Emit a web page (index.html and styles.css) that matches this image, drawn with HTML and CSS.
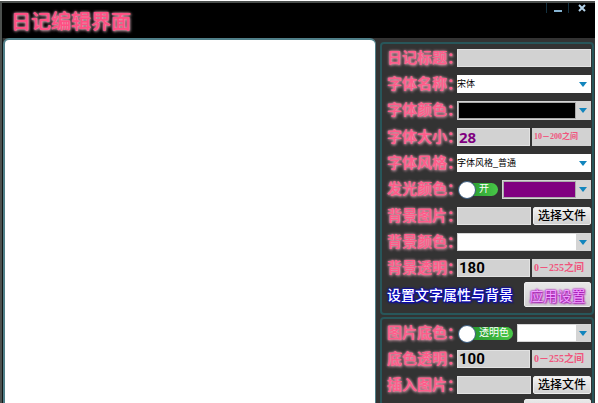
FILE: index.html
```html
<!DOCTYPE html>
<html lang="zh-CN">
<head>
    <meta charset="UTF-8">
    <meta name="viewport" content="width=device-width, initial-scale=1.0">
    <title>日记编辑界面</title>
    <link rel="stylesheet" href="styles.css">
</head>
<body>
    <div class="window">
        <header class="title-bar">
            <h1>日记编辑界面</h1>
            <div class="window-buttons">
                <button type="button" aria-label="最小化">
                    <svg width="8" height="10" viewBox="0 0 8 10"><path d="M0 8h8" stroke="#86b4d2" stroke-width="2"/></svg>
                </button>
                <button type="button" aria-label="关闭">
                    <svg width="8" height="8" viewBox="0 0 8 8"><path d="M1 1l6 6M7 1L1 7" stroke="#b4d2e8" stroke-width="2"/></svg>
                </button>
            </div>
        </header>

        <main class="content">
            <textarea class="editor" aria-label="日记内容"></textarea>

            <div class="sidebar">
                <!-- 文字属性与背景 -->
                <section class="panel">
                    <div class="row">
                        <label class="name" for="title">日记标题：</label>
                        <input class="field" id="title" type="text">
                    </div>
                    <div class="row">
                        <label class="name" for="fontName">字体名称：</label>
                        <div class="combo">
                            <select id="fontName"><option>宋体</option></select>
                        </div>
                    </div>
                    <div class="row color-row">
                        <label class="name" for="fontColor">字体颜色：</label>
                        <div class="combo color black">
                            <select id="fontColor"><option></option></select>
                        </div>
                    </div>
                    <div class="row">
                        <label class="name" for="fontSize">字体大小：</label>
                        <input class="field purple-text" id="fontSize" type="text" value="28">
                        <span class="hint small">10－200之间</span>
                    </div>
                    <div class="row">
                        <label class="name" for="fontStyle">字体风格：</label>
                        <div class="combo">
                            <select id="fontStyle"><option>字体风格_普通</option></select>
                        </div>
                    </div>
                    <div class="row color-row">
                        <label class="name" for="glowColor">发光颜色：</label>
                        <label class="switch"><input type="checkbox" checked><span>开</span></label>
                        <div class="combo color purple">
                            <select id="glowColor"><option></option></select>
                        </div>
                    </div>
                    <div class="row">
                        <label class="name" for="bgImage">背景图片：</label>
                        <input class="field" id="bgImage" type="text">
                        <button type="button" class="file-btn">选择文件</button>
                    </div>
                    <div class="row">
                        <label class="name" for="bgColor">背景颜色：</label>
                        <div class="combo color">
                            <select id="bgColor"><option></option></select>
                        </div>
                    </div>
                    <div class="row">
                        <label class="name" for="bgAlpha">背景透明：</label>
                        <input class="field" id="bgAlpha" type="text" value="180">
                        <span class="hint">0－255之间</span>
                    </div>
                    <div class="apply-row">
                        <span class="apply-text">设置文字属性与背景</span>
                        <button type="button" class="apply-btn">应用设置</button>
                    </div>
                </section>

                <!-- 图片属性 -->
                <section class="panel">
                    <div class="row">
                        <label class="name" for="imgColor">图片底色：</label>
                        <label class="switch wide"><input type="checkbox" checked><span>透明色</span></label>
                        <div class="combo color">
                            <select id="imgColor"><option></option></select>
                        </div>
                    </div>
                    <div class="row">
                        <label class="name" for="imgAlpha">底色透明：</label>
                        <input class="field" id="imgAlpha" type="text" value="100">
                        <span class="hint">0－255之间</span>
                    </div>
                    <div class="row">
                        <label class="name" for="insertImage">插入图片：</label>
                        <input class="field" id="insertImage" type="text">
                        <button type="button" class="file-btn">选择文件</button>
                    </div>
                    <div class="apply-row">
                        <button type="button" class="apply-btn" aria-label="应用"></button>
                    </div>
                </section>
            </div>
        </main>
    </div>
</body>
</html>
```

FILE: styles.css
```css
* {
    box-sizing: border-box;
}
body {
    margin: 0;
    padding: 1px 3px 0 0;
    height: 100vh;
    overflow: hidden;
    background: #fff;
    font-family: "Liberation Sans", "Noto Sans CJK SC", sans-serif;
}
button, input, select, textarea {
    margin: 0;
    font-family: inherit;
}
.window {
    display: flex;
    flex-direction: column;
    height: 100%;
    overflow: hidden;
    background: #333;
    border-top: 2px solid #4c504e;
    border-left: 2px solid #4c504e;
}
.title-bar {
    display: flex;
    flex: none;
    justify-content: space-between;
    height: 35px;
    padding-left: 9px;
    background: #000;
}
.title-bar h1 {
    margin: 0;
    font-size: 20px;
    font-weight: 500;
    line-height: 38px;
    color: #ff4f83;
    text-shadow: 0 0 1px #ff80a4, 0 0 3px #ffa8c0, 1px 1px 3px #b0a0a5;
}
.window-buttons {
    display: flex;
}
.window-buttons button {
    display: flex;
    align-items: center;
    justify-content: center;
    width: 22px;
    height: 10px;
    padding: 0;
    background: none;
    border: 0;
    border-left: 1px solid #14303f;
}
.window-buttons button:last-child {
    width: 27px;
}

.content {
    display: flex;
    flex: 1;
    gap: 4px;
    min-height: 0;
    border-left: 1px solid #101818;
}
.editor {
    flex: 1;
    min-width: 0;
    padding: 6px;
    resize: none;
    outline: 0;
    background: #fff;
    border: 2px solid #4f7f88;
    border-right-width: 1px;
    border-bottom: 0;
    border-radius: 6px 6px 0 0;
}
.sidebar {
    display: flex;
    flex: none;
    flex-direction: column;
    gap: 2px;
    width: 215px;
    padding: 4px 1px 0 0;
}
.panel {
    display: flex;
    flex: none;
    flex-direction: column;
    gap: 8px;
    padding: 5px 1px 6px 5px;
    border: 2px solid #28565a;
    border-radius: 4px;
}
.row {
    display: flex;
    gap: 2px;
    height: 18px;
}
.color-row {
    height: 19px;
}
.name {
    flex: none;
    width: 68px;
    font-size: 15px;
    font-weight: 500;
    line-height: 17px;
    white-space: nowrap;
    color: #ff5c8a;
    text-shadow: 0 0 1px #ff80a4, 0 0 3px #ffa8c0, 1px 1px 3px #d8a8b6;
}
.field {
    flex: 1;
    min-width: 0;
    padding: 0 1px 1px;
    font-family: Roboto, "Noto Sans", sans-serif;
    font-size: 15px;
    font-weight: bold;
    line-height: 15px;
    color: #000;
    background: #d2d2d2;
    border: 1px solid #e2e2e2;
    border-radius: 0;
    outline: 0;
}
.purple-text {
    font-family: "Noto Sans", sans-serif;
    color: #800080;
}
.hint {
    flex: none;
    width: 59px;
    padding-left: 2px;
    font-family: "Liberation Serif", "Noto Sans CJK SC", serif;
    font-size: 10px;
    font-weight: bold;
    line-height: 17px;
    white-space: nowrap;
    overflow: hidden;
    color: #f0557c;
    background: #d2d2d2;
}
.hint.small {
    font-size: 8px;
}

/* drop-downs */
.combo {
    position: relative;
    flex: 1;
    min-width: 0;
}
.combo select {
    display: block;
    width: 100%;
    height: 100%;
    padding: 0 16px 0 0;
    font-size: 9px;
    color: #000;
    background: #fff;
    border: 0;
    border-radius: 0;
    outline: 0;
    appearance: none;
}
.combo::after {
    content: "";
    position: absolute;
    top: 7px;
    right: 4px;
    border: 4px solid transparent;
    border-top: 5px solid #1285bd;
    border-bottom: 0;
    pointer-events: none;
}
.combo.color {
    padding: 1px 15px 1px 1px;
    background: #d4d4d4;
}
.combo.black select {
    background: #000;
    border: 1px solid #aaa;
}
.combo.purple select {
    background: #800080;
    border: 1px solid #aaa;
}

/* on/off switch */
.switch {
    position: relative;
    flex: none;
    width: 43px;
    height: 18px;
    font-size: 10px;
    line-height: 16px;
    color: #fff;
}
.switch.wide {
    width: 58px;
}
.switch input {
    position: absolute;
    opacity: 0;
}
.switch span {
    display: block;
    height: 13px;
    margin: 3px 2px 2px 4px;
    padding-left: 18px;
    line-height: 12px;
    white-space: nowrap;
    background: linear-gradient(90deg, #208c28, #48c848);
    border-radius: 7px;
}
.switch span::before {
    content: "";
    position: absolute;
    top: 1px;
    left: 1px;
    width: 16px;
    height: 16px;
    background: #fff;
    border: 1px solid #3a5c80;
    border-radius: 50%;
}

/* buttons */
.file-btn {
    flex: none;
    width: 58px;
    padding: 0;
    font-size: 12px;
    font-weight: 500;
    line-height: 16px;
    white-space: nowrap;
    color: #000;
    background: linear-gradient(#f2f2f2, #d0d0d0);
    border: 1px solid #eee;
    border-radius: 2px;
}
.apply-row {
    display: flex;
    align-items: center;
    height: 25px;
    margin-top: -3px;
}
.apply-text {
    font-size: 14px;
    font-weight: 500;
    line-height: 20px;
    white-space: nowrap;
    color: #fff;
    text-shadow: 0 0 2px #00c, 0 0 2px #00c, 0 0 3px #00c, 1px 1px 2px #00c;
}
.apply-btn {
    width: 67px;
    height: 25px;
    margin-left: auto;
    padding: 0;
    font-size: 14px;
    color: #f0a0ff;
    text-shadow: 0 0 2px #a000b0, 0 0 2px #a000b0, 1px 1px 2px #a000b0;
    background: linear-gradient(#e8e8e8, #cfcfcf);
    border: 1px solid #eee;
    border-radius: 2px;
}
```
